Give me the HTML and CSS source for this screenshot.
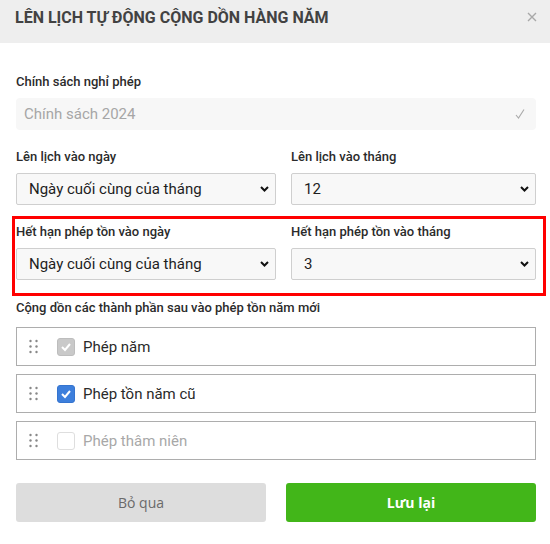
FILE: index.html
```html
<!DOCTYPE html>
<html lang="vi">
<head>
<meta charset="utf-8">
<title>Lên lịch tự động cộng dồn hàng năm</title>
<link rel="stylesheet" href="styles.css">
</head>
<body>
<div class="modal">
  <div class="modal-header">
    <h1 class="modal-title">LÊN LỊCH TỰ ĐỘNG CỘNG DỒN HÀNG NĂM</h1>
    <button class="close-btn" aria-label="Đóng">
      <svg width="10" height="10" viewBox="0 0 10 10"><path d="M1 1 L9 9 M9 1 L1 9" stroke="#a8a8a8" stroke-width="1.4" fill="none"/></svg>
    </button>
  </div>
  <div class="modal-body">
    <div class="field">
      <label class="label">Chính sách nghỉ phép</label>
      <div class="input-disabled">
        <span>Chính sách 2024</span>
        <svg width="10" height="10" viewBox="0 0 10 10"><path d="M1 6 L3.5 9 L9 0.5" stroke="#aaa" stroke-width="1.1" fill="none"/></svg>
      </div>
    </div>

    <div class="grid-row">
      <div class="field">
        <label class="label">Lên lịch vào ngày</label>
        <div class="select"><span>Ngày cuối cùng của tháng</span><svg class="chev" width="9" height="6" viewBox="0 0 9 6"><path d="M1 1 L4.5 4.5 L8 1" stroke="#111" stroke-width="2" fill="none"/></svg></div>
      </div>
      <div class="field">
        <label class="label">Lên lịch vào tháng</label>
        <div class="select"><span>12</span><svg class="chev" width="9" height="6" viewBox="0 0 9 6"><path d="M1 1 L4.5 4.5 L8 1" stroke="#111" stroke-width="2" fill="none"/></svg></div>
      </div>
    </div>

    <div class="highlight">
      <div class="grid-row">
        <div class="field">
          <label class="label">Hết hạn phép tồn vào ngày</label>
          <div class="select"><span>Ngày cuối cùng của tháng</span><svg class="chev" width="9" height="6" viewBox="0 0 9 6"><path d="M1 1 L4.5 4.5 L8 1" stroke="#111" stroke-width="2" fill="none"/></svg></div>
        </div>
        <div class="field">
          <label class="label">Hết hạn phép tồn vào tháng</label>
          <div class="select"><span>3</span><svg class="chev" width="9" height="6" viewBox="0 0 9 6"><path d="M1 1 L4.5 4.5 L8 1" stroke="#111" stroke-width="2" fill="none"/></svg></div>
        </div>
      </div>
    </div>

    <label class="label label-list">Cộng dồn các thành phần sau vào phép tồn năm mới</label>
    <ul class="sort-list">
      <li class="sort-item">
        <svg class="drag" width="10" height="16" viewBox="0 0 10 16"><g fill="#888"><circle cx="1.5" cy="2" r="1.2"/><circle cx="7.5" cy="2" r="1.2"/><circle cx="1.5" cy="7.5" r="1.2"/><circle cx="7.5" cy="7.5" r="1.2"/><circle cx="1.5" cy="13" r="1.2"/><circle cx="7.5" cy="13" r="1.2"/></g></svg>
        <span class="cb cb-disabled"><svg width="12" height="10" viewBox="0 0 12 10"><path d="M2 5 L5 8 L10 2" stroke="#fff" stroke-width="2" fill="none"/></svg></span>
        <span class="item-text">Phép năm</span>
      </li>
      <li class="sort-item">
        <svg class="drag" width="10" height="16" viewBox="0 0 10 16"><g fill="#888"><circle cx="1.5" cy="2" r="1.2"/><circle cx="7.5" cy="2" r="1.2"/><circle cx="1.5" cy="7.5" r="1.2"/><circle cx="7.5" cy="7.5" r="1.2"/><circle cx="1.5" cy="13" r="1.2"/><circle cx="7.5" cy="13" r="1.2"/></g></svg>
        <span class="cb cb-checked"><svg width="12" height="10" viewBox="0 0 12 10"><path d="M2 5 L5 8 L10 2" stroke="#fff" stroke-width="2" fill="none"/></svg></span>
        <span class="item-text">Phép tồn năm cũ</span>
      </li>
      <li class="sort-item">
        <svg class="drag" width="10" height="16" viewBox="0 0 10 16"><g fill="#888"><circle cx="1.5" cy="2" r="1.2"/><circle cx="7.5" cy="2" r="1.2"/><circle cx="1.5" cy="7.5" r="1.2"/><circle cx="7.5" cy="7.5" r="1.2"/><circle cx="1.5" cy="13" r="1.2"/><circle cx="7.5" cy="13" r="1.2"/></g></svg>
        <span class="cb cb-empty"></span>
        <span class="item-text muted">Phép thâm niên</span>
      </li>
    </ul>

    <div class="actions">
      <button class="btn btn-cancel">Bỏ qua</button>
      <button class="btn btn-save">Lưu lại</button>
    </div>
  </div>
</div>
</body>
</html>
```
FILE: styles.css
```css
* { box-sizing: border-box; }
html, body { margin: 0; padding: 0; background: #fff; }
body { font-family: Roboto, "Noto Sans", sans-serif; color: #222; }

.modal { width: 550px; height: 544px; background: #fff; }

.modal-header {
  height: 43px;
  background: #eeeeee;
  display: flex;
  justify-content: space-between;
  align-items: flex-start;
  padding: 8px 13px 0 15px;
}
.modal-title {
  margin: 0;
  font-size: 16px;
  line-height: 20px;
  font-weight: 700;
  color: #424242;
}
.close-btn {
  border: 0;
  background: none;
  padding: 0;
  margin-top: 4px;
  width: 10px;
  height: 10px;
  display: block;
}
.close-btn svg { display: block; }

.modal-body { padding: 31px 14px 0 16px; }

.label {
  display: block;
  font-size: 13px;
  line-height: 16px;
  font-weight: 500;
  color: #2b2b2b;
  margin-bottom: 8px;
}

.input-disabled {
  height: 32px;
  background: #f7f7f7;
  border-radius: 4px;
  display: flex;
  align-items: center;
  justify-content: space-between;
  padding: 0 11px 0 8px;
  font-size: 15px;
  color: #a6a6a6;
}
.input-disabled svg { display: block; }

.grid-row {
  display: grid;
  grid-template-columns: 260px 245px;
  column-gap: 15px;
  margin-top: 19px;
}

.select {
  height: 32px;
  border: 1px solid #cfcfcf;
  border-radius: 2px;
  background: #f8f8f8;
  display: flex;
  align-items: center;
  justify-content: space-between;
  padding: 0 6px 0 12px;
  font-size: 15px;
  color: #1e1e1e;
}
.chev { display: block; }

.highlight {
  border: 3px solid #ff0000;
  margin: 11px -10px 0 -4px;
  padding: 5px 7px 13px 1px;
}
.highlight .grid-row { margin-top: 0; }

.label-list { margin-top: 4px; margin-bottom: 11px; }

.sort-list { list-style: none; margin: 0; padding: 0; display: flex; flex-direction: column; gap: 8px; }
.sort-item {
  height: 39px;
  border: 1px solid #adadad;
  display: flex;
  align-items: center;
  padding-left: 12px;
}
.drag { display: block; flex: none; }
.cb {
  width: 18px;
  height: 18px;
  border-radius: 3px;
  margin-left: 18px;
  display: flex;
  align-items: center;
  justify-content: center;
  flex: none;
}
.cb svg { display: block; }
.cb-disabled { background: #c9c9c9; border: 1px solid #bdbdbd; }
.cb-checked { background: #3d7fdc; border: 1px solid #3574cf; }
.cb-empty { background: #fff; border: 1px solid #dedede; }
.item-text { margin-left: 8px; font-size: 15px; color: #2a2a2a; }
.item-text.muted { color: #a8a8a8; }

.actions {
  display: grid;
  grid-template-columns: 250px 250px;
  column-gap: 20px;
  margin-top: 23px;
}
.btn {
  height: 39px;
  border: 0;
  border-radius: 3px;
  font-family: "Open Sans", Roboto, sans-serif;
  font-size: 14px;
}
.btn-cancel { background: #dddddd; color: #6a6a6a; }
.btn-save { background: #42b619; color: #fff; font-weight: 700; }
```
